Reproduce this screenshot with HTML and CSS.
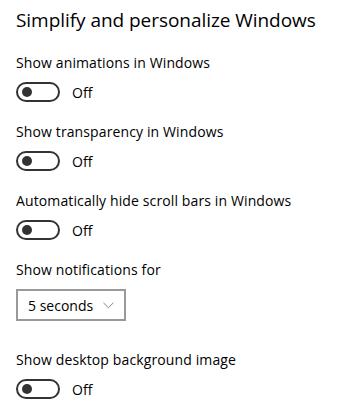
FILE: index.html
```html
<!DOCTYPE html>
<html lang="en">
<head>
    <meta charset="UTF-8">
    <title>Ease of Access - Other options</title>
    <link rel="stylesheet" href="styles.css">
</head>
<body>
    <div class="page">
        <h2 class="section-title">Simplify and personalize Windows</h2>

        <div class="setting">
            <div class="setting-label">Show animations in Windows</div>
            <div class="toggle-row">
                <span class="toggle"><span class="knob"></span></span>
                <span class="toggle-state">Off</span>
            </div>
        </div>

        <div class="setting">
            <div class="setting-label">Show transparency in Windows</div>
            <div class="toggle-row">
                <span class="toggle"><span class="knob"></span></span>
                <span class="toggle-state">Off</span>
            </div>
        </div>

        <div class="setting">
            <div class="setting-label">Automatically hide scroll bars in Windows</div>
            <div class="toggle-row">
                <span class="toggle"><span class="knob"></span></span>
                <span class="toggle-state">Off</span>
            </div>
        </div>

        <div class="setting">
            <div class="setting-label">Show notifications for</div>
            <div class="dropdown">
                <span>5 seconds</span>
                <svg class="chevron" width="12" height="7" viewBox="0 0 12 7">
                    <path d="M0.5 0.5 L6 6 L11.5 0.5" fill="none" stroke="#777" stroke-width="1"/>
                </svg>
            </div>
        </div>

        <div class="setting setting-spaced">
            <div class="setting-label">Show desktop background image</div>
            <div class="toggle-row">
                <span class="toggle"><span class="knob"></span></span>
                <span class="toggle-state">Off</span>
            </div>
        </div>
    </div>
</body>
</html>
```

FILE: styles.css
```css
* {
    margin: 0;
    padding: 0;
    box-sizing: border-box;
}

body {
    font-family: 'Open Sans', sans-serif;
    background: #fff;
    color: #000;
}

.page {
    padding: 6px 16px 0;
}

.section-title {
    font-weight: 400;
    font-size: 19px;
    letter-spacing: -0.05px;
    line-height: 28px;
    white-space: nowrap;
    margin-bottom: 19px;
}

.setting {
    margin-bottom: 20px;
}

/* margins collapse with the previous block, so this is the full gap */
.setting-spaced {
    margin-top: 29px;
}

.setting-label {
    font-size: 14px;
    letter-spacing: 0.12px;
    line-height: 20px;
    white-space: nowrap;
    margin-bottom: 9px;
}

.toggle-row {
    display: flex;
    align-items: center;
    height: 20px;
}

.toggle {
    width: 44px;
    height: 20px;
    border: 2px solid #333;
    border-radius: 10px;
    display: flex;
    align-items: center;
    padding-left: 4px;
}

.knob {
    width: 10px;
    height: 10px;
    border-radius: 50%;
    background: #333;
}

.toggle-state {
    font-size: 14px;
    margin-left: 12px;
}

.dropdown {
    width: 110px;
    height: 32px;
    border: 2px solid #999;
    display: flex;
    align-items: center;
    padding: 0 10px;
    font-size: 14px;
    white-space: nowrap;
    gap: 10px;
}
```
